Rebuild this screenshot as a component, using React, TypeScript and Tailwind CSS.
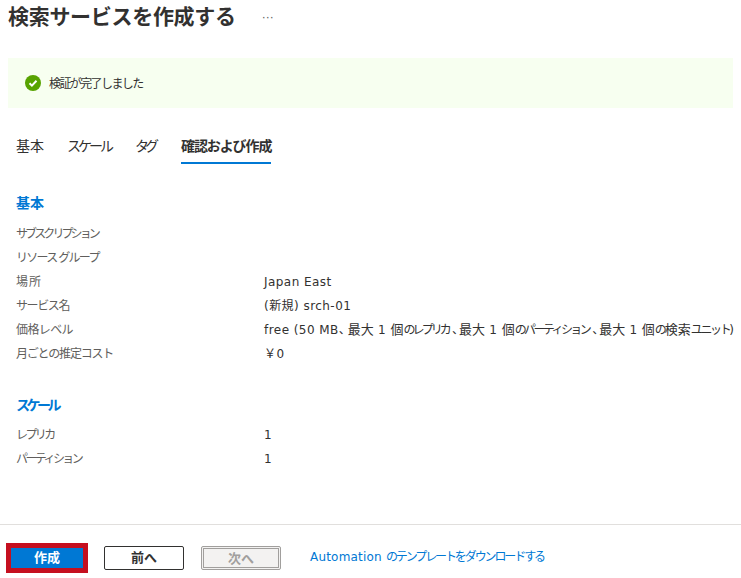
import type { ReactNode } from 'react';

const font = "font-['Liberation_Sans','Noto_Sans_CJK_JP',sans-serif]";
const valueFont = "font-['DejaVu_Sans','Noto_Sans_CJK_JP',sans-serif]";

function Kana({ t, children }: { t: string; children: ReactNode }) {
  return <span className={t}>{children}</span>;
}

const PRICE = (
  <>
    free (50 MB<Kana t="tracking-[-3px]">、</Kana>
    <span className="text-[13px] tracking-[0px]">最大</span> 1 <span className="text-[13px] tracking-[0px]">個</span>
    <Kana t="tracking-[-2.9px]">のレプリカ</Kana>
    <Kana t="ml-[3px] tracking-[-5px]">、</Kana>
    <span className="text-[13px] tracking-[0px]">最大</span> 1 <span className="text-[13px] tracking-[0px]">個</span>
    <Kana t="tracking-[-2.6px]">のパーティション</Kana>
    <Kana t="ml-[3px] tracking-[-5px]">、</Kana>
    <span className="text-[13px] tracking-[0px]">最大</span> 1 <span className="text-[13px] tracking-[0px]">個</span>
    <Kana t="tracking-[-2px]">の</Kana>
    <span className="text-[13px] tracking-[0px]">検索</span>
    <Kana t="tracking-[-2.4px]">ユニット</Kana>)
  </>
);

const BASICS: { label: string; tr: string; value: ReactNode }[] = [
  { label: 'サブスクリプション', tr: 'tracking-[-2.9px]', value: '' },
  { label: 'リソース グループ', tr: 'tracking-[-1.7px]', value: '' },
  { label: '場所', tr: 'tracking-[0.9px]', value: 'Japan East' },
  { label: 'サービス名', tr: 'tracking-[-1.4px]', value: '(新規) srch-01' },
  { label: '価格レベル', tr: 'tracking-[-0.6px]', value: PRICE },
  { label: '月ごとの推定コスト', tr: 'tracking-[-1.2px]', value: '￥0' },
];

const SCALE = [
  { label: 'レプリカ', tr: 'tracking-[-2.6px]', value: '1' },
  { label: 'パーティション', tr: 'tracking-[-2.6px]', value: '1' },
];

function Rows({ rows }: { rows: { label: string; tr: string; value: ReactNode }[] }) {
  return (
    <div className="flex flex-col">
      {rows.map(r => (
        <div key={r.label} className="flex h-[24px] items-center whitespace-nowrap">
          <div className={`w-[248px] shrink-0 text-[12px] text-[#605e5c] ${r.tr}`}>{r.label}</div>
          <div className={`${valueFont} text-[12px] tracking-[0.45px] text-[#323130]`}>{r.value}</div>
        </div>
      ))}
    </div>
  );
}

export default function App() {
  return (
    <div className={`${font} flex h-[578px] w-[741px] flex-col overflow-hidden bg-white`}>
      <div className="flex h-[34px] items-center pl-[8px]">
        <h1 className="text-[21px] font-bold tracking-[-0.3px] text-[#323130]">検索サービスを作成する</h1>
        <span className="ml-[26px] text-[12px] text-[#605e5c]">···</span>
      </div>

      <div className="mx-[8px] mt-[24px] flex h-[50px] items-center gap-[8px] bg-[#f7fff0] pl-[17px]">
        <svg width="16" height="16" viewBox="0 0 16 16">
          <circle cx="8" cy="8" r="8" fill="#57a300" />
          <path d="M4.5 8.3l2.4 2.3 4.6-4.8" fill="none" stroke="#fff" strokeWidth="2" />
        </svg>
        <span className="pt-[1px] text-[12px] tracking-[-1.6px] text-[#323130]">検証が完了しました</span>
      </div>

      <div className="mt-[22px] flex gap-[23px] pl-[16px] text-[14px] text-[#323130]">
        <div className="h-[34px] pt-[6px]">基本</div>
        <div className="h-[34px] pt-[6px] tracking-[-3px]">スケール</div>
        <div className="ml-[1px] h-[34px] pt-[6px] tracking-[-4px]">タグ</div>
        <div className="ml-[3px] h-[34px] border-b-2 border-[#0078d4] pt-[6px] font-bold tracking-[-1.1px]">確認および作成</div>
      </div>

      <div className="pl-[16px]">
        <h2 className="mt-[29px] h-[29px] text-[14px] font-bold text-[#0078d4]">基本</h2>
        <Rows rows={BASICS} />
        <h2 className="mt-[29px] mb-[4px] h-[24px] text-[14px] font-bold tracking-[-3.5px] text-[#0078d4]">スケール</h2>
        <Rows rows={SCALE} />
      </div>

      <div className="mt-auto h-[54px] border-t border-[#e1dfdd] pl-[6px] pt-[18px]">
        <div className="flex h-[30px] items-center">
          <div className="border-[5px] border-[#c50f1f]">
            <button className="block h-[20px] w-[72px] bg-[#0078d4] text-[13px] font-bold text-white">作成</button>
          </div>
          <button className="ml-[16px] h-[24px] w-[80px] rounded-[2px] border border-[#323130] bg-white text-[13px] font-bold text-[#323130]">前へ</button>
          <button className="ml-[17px] h-[24px] w-[80px] rounded-[2px] border-[3px] border-double border-[#a19f9d] bg-[#f3f2f1] text-[13px] font-bold text-[#a19f9d]">次へ</button>
          <a className={`${valueFont} ml-[29px] -mt-[2px] text-[12px] tracking-[0.2px] text-[#0078d4]`}>
            Automation <span className="tracking-[-2.1px]">のテンプレートをダウンロードする</span>
          </a>
        </div>
      </div>
    </div>
  );
}
